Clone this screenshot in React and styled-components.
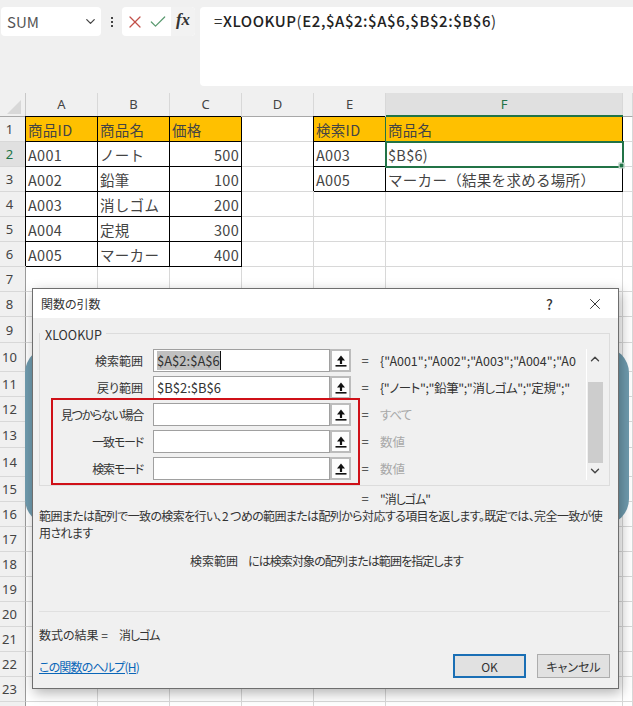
import React from "react";
import styled, { createGlobalStyle } from "styled-components";
import { ChevronDown, ChevronUp, X, Check } from "lucide-react";

const JP = `"Noto Sans CJK JP", "Noto Sans", sans-serif`;

const GlobalStyle = createGlobalStyle`
    html, body {
        margin: 0;
        padding: 0;
        background: #fff;
        overflow: hidden;
    }
    body {
        font-family: ${JP};
        color: #333;
    }
`;

const colWidths = [26, 72, 72, 72, 72, 72, 237, 10];
const rowHeights = [25, 25, 25, 25, 25, 25, 25, 25, 26, 29, 25, 25, 26, 29, 25, 25, 25, 25, 25, 25, 25, 25, 25, 25];

const cells = {
    "0:0": { text: "商品ID", fill: true },
    "0:1": { text: "商品名", fill: true },
    "0:2": { text: "価格", fill: true },
    "1:0": { text: "A001" },
    "1:1": { text: "ノート" },
    "1:2": { text: "500", right: true },
    "2:0": { text: "A002" },
    "2:1": { text: "鉛筆" },
    "2:2": { text: "100", right: true },
    "3:0": { text: "A003" },
    "3:1": { text: "消しゴム" },
    "3:2": { text: "200", right: true },
    "4:0": { text: "A004" },
    "4:1": { text: "定規" },
    "4:2": { text: "300", right: true },
    "5:0": { text: "A005" },
    "5:1": { text: "マーカー" },
    "5:2": { text: "400", right: true },
    "0:4": { text: "検索ID", fill: true },
    "0:5": { text: "商品名", fill: true },
    "1:4": { text: "A003" },
    "1:5": { text: "$B$6)" },
    "2:4": { text: "A005" },
    "2:5": { text: "マーカー（結果を求める場所）" },
};

const args = [
    { label: "検索範囲", value: "$A$2:$A$6", selected: true, result: `{"A001";"A002";"A003";"A004";"A005"}` },
    { label: "戻り範囲", value: "$B$2:$B$6", result: `{"ノート";"鉛筆";"消しゴム";"定規";"`, resultSpacing: -0.4 },
    { label: "見つからない場合", labelSpacing: -1.3, result: "すべて", resultSpacing: -1, muted: true },
    { label: "一致モード", labelSpacing: -1.2, result: "数値", muted: true },
    { label: "検索モード", labelSpacing: -1.2, result: "数値", muted: true },
];

const RefIcon = () => (
    <svg width="12" height="14" viewBox="0 0 12 14">
        <path d="M6 1.5 L10 6.5 H7.1 V10 H4.9 V6.5 H2 Z" fill="#111" />
        <rect x="0.5" y="11" width="11" height="1.6" fill="#111" />
    </svg>
);

const App = () => {
    return (
        <Page>
            <GlobalStyle />
            <Toolbar>
                <NameBox>
                    SUM
                    <ChevronDown size={15} color="#444" />
                </NameBox>
                <Dots>
                    <i /><i /><i />
                </Dots>
                <FormulaButtons>
                    <X size={20} strokeWidth={1.5} color="#c2504a" />
                    <Check size={20} strokeWidth={1.5} color="#5a9a70" />
                    <FxButton>fx</FxButton>
                </FormulaButtons>
                <FormulaBar>
                    =<b>XLOOKUP</b>(<b>E2,$A$2:$A$6,$B$2:$B$6</b>)
                </FormulaBar>
            </Toolbar>

            <Sheet>
                <Corner><svg width="16" height="16" viewBox="0 0 16 16"><path d="M15 1 V15 H1 Z" fill="#d8d8d8" /></svg></Corner>
                {["A", "B", "C", "D", "E", "F", ""].map((c, i) => (
                    <ColHead key={i} $active={c === "F"}>{c}</ColHead>
                ))}
                {rowHeights.map((_, r) => (
                    <React.Fragment key={r}>
                        <RowHead $active={r === 1}>{r < 23 ? r + 1 : ""}</RowHead>
                        {colWidths.slice(1).map((_, c) => {
                            const cell = cells[`${r}:${c}`];
                            return (
                                <Cell
                                    key={c}
                                    $boxed={!!cell}
                                    $fill={cell && cell.fill}
                                    $right={cell && cell.right}
                                    $range={c === 5 && r === 0}
                                    $active={c === 5 && r === 1}
                                >
                                    {cell && cell.text}
                                    {c === 5 && r === 1 && <FillHandle />}
                                </Cell>
                            );
                        })}
                    </React.Fragment>
                ))}
            </Sheet>

            <BlueShape />

            <Dialog>
                <TitleBar>
                    <span>関数の引数</span>
                    <TitleActions>
                        <HelpMark>?</HelpMark>
                        <X size={18} strokeWidth={1.2} color="#222" />
                    </TitleActions>
                </TitleBar>
                <DialogBody>
                    <ArgGroup>
                        <GroupTitle>XLOOKUP</GroupTitle>
                        <ArgList>
                            <div>
                                {args.map(a => (
                                    <ArgRow key={a.label}>
                                        <ArgLabel $spacing={a.labelSpacing}>{a.label}</ArgLabel>
                                        <ArgInput>
                                            {a.selected ? <Selected>{a.value}</Selected> : a.value}
                                        </ArgInput>
                                        <RefButton><RefIcon /></RefButton>
                                        <Equals>=</Equals>
                                        <ArgResult $muted={a.muted} $spacing={a.resultSpacing}>{a.result}</ArgResult>
                                    </ArgRow>
                                ))}
                            </div>
                            <ScrollBar>
                                <ChevronUp size={14} strokeWidth={2.4} color="#444" />
                                <Thumb />
                                <ChevronDown size={14} strokeWidth={2.4} color="#444" />
                            </ScrollBar>
                        </ArgList>
                        <RedFrame />
                    </ArgGroup>

                    <TotalRow>
                        <Equals>=</Equals>
                        <TightText>"消しゴム"</TightText>
                    </TotalRow>
                    <Description>
                        範囲または配列で一致の検索を行い、2 つめの範囲または配列から対応する項目を返します。既定では、完全一致が使用されます
                    </Description>
                    <ArgHelp>
                        <span>検索範囲</span>
                        <ArgHelpText>には検索対象の配列または範囲を指定します</ArgHelpText>
                    </ArgHelp>
                    <Divider />
                    <ResultLine>
                        <span>数式の結果 =</span>
                        <TightText>消しゴム</TightText>
                    </ResultLine>
                    <Footer>
                        <HelpLink>この関数のヘルプ(H)</HelpLink>
                        <Buttons>
                            <DialogButton $primary>OK</DialogButton>
                            <DialogButton>キャンセル</DialogButton>
                        </Buttons>
                    </Footer>
                </DialogBody>
            </Dialog>
        </Page>
    );
};

export default App;

const Page = styled.div`
    position: relative;
    width: 633px;
    height: 706px;
    overflow: hidden;
    background: #fff;
`;

const Toolbar = styled.div`
    display: flex;
    align-items: flex-start;
    height: 93px;
    padding: 7px 0 0 1px;
    box-sizing: border-box;
    background: #f0f0f0;
`;

const NameBox = styled.div`
    display: flex;
    align-items: center;
    justify-content: space-between;
    width: 100px;
    height: 29px;
    box-sizing: border-box;
    padding: 0 3px 0 6px;
    background: #fff;
    border-radius: 4px;
    font-size: 15px;
    color: #555;
`;

const Dots = styled.div`
    display: flex;
    flex-direction: column;
    gap: 2px;
    width: 21px;
    height: 29px;
    align-items: center;
    justify-content: center;

    i {
        width: 2px;
        height: 2px;
        background: #444;
    }
`;

const FormulaButtons = styled.div`
    display: flex;
    align-items: center;
    width: 73px;
    height: 29px;
    padding-left: 3px;
    gap: 3px;
    box-sizing: border-box;
    background: #fff;
    border-radius: 4px;
`;

const FxButton = styled.div`
    display: flex;
    align-items: center;
    justify-content: center;
    flex: 1;
    height: 100%;
    background: #f2f2f2;
    border-radius: 0 4px 4px 0;
    font-family: "Liberation Serif", serif;
    font-style: italic;
    font-weight: 700;
    font-size: 17px;
    color: #333;
    padding-bottom: 3px;
    box-sizing: border-box;
`;

const FormulaBar = styled.div`
    flex: 1;
    height: 79px;
    margin-left: 5px;
    padding: 5px 0 0 14px;
    box-sizing: border-box;
    background: #fff;
    border-radius: 4px 0 0 4px;
    font-size: 15px;
    letter-spacing: 0.55px;
    line-height: 18px;
    color: #333;
    white-space: nowrap;

    b {
        font-weight: 500;
        color: #222;
    }
`;

const Sheet = styled.div`
    display: grid;
    grid-template-columns: ${colWidths.map(w => `${w}px`).join(" ")};
    grid-template-rows: 24px ${rowHeights.map(h => `${h}px`).join(" ")};
    background: #fff;
`;

const Corner = styled.div`
    display: flex;
    align-items: flex-end;
    justify-content: flex-end;
    padding: 0 3px 1px 0;
    box-sizing: border-box;
    background: #f0f0f0;
    border-right: 1px solid #c8c8c8;
    border-bottom: 1px solid #a8a8a8;
`;

const ColHead = styled.div`
    display: flex;
    align-items: center;
    justify-content: center;
    padding-bottom: 2px;
    box-sizing: border-box;
    background: ${props => props.$active ? "#e0e0e0" : "#f0f0f0"};
    color: ${props => props.$active ? "#217346" : "#444"};
    border-right: 1px solid #d8d8d8;
    border-bottom: 1px solid #a8a8a8;
    font-size: 13px;
    font-family: "Noto Sans", sans-serif;
`;

const RowHead = styled.div`
    display: flex;
    align-items: center;
    justify-content: center;
    padding-right: 6px;
    box-sizing: border-box;
    background: ${props => props.$active ? "#e0e0e0" : "#f0f0f0"};
    color: ${props => props.$active ? "#217346" : "#444"};
    border-right: 1px solid ${props => props.$active ? "#217346" : "#9a9a9a"};
    border-bottom: 1px solid #d8d8d8;
    font-size: 13px;
    font-family: "Noto Sans", sans-serif;
`;

const Cell = styled.div`
    position: relative;
    display: flex;
    align-items: center;
    justify-content: ${props => props.$right ? "flex-end" : "flex-start"};
    padding: 0 2px 0 2px;
    box-sizing: border-box;
    font-size: 14.5px;
    letter-spacing: 0.3px;
    text-spacing-trim: space-all;
    color: #444;
    white-space: nowrap;
    background: ${props => props.$fill ? "#ffc000" : "#fff"};
    border-right: 1px solid ${props => props.$boxed ? "#000" : "#d8d8d8"};
    border-bottom: 1px solid ${props => props.$boxed ? "#000" : "#d8d8d8"};
    ${props => props.$boxed && "box-shadow: -1px -1px 0 #000; z-index: 1;"}
    ${props => props.$range && "box-shadow: -1px 0 0 #217346, 0 -2px 0 #217346; z-index: 2;"}
    ${props => props.$active && "outline: 2px solid #217346; outline-offset: -1px; z-index: 2;"}
`;

const FillHandle = styled.span`
    position: absolute;
    right: -3px;
    bottom: -3px;
    width: 5px;
    height: 5px;
    background: #217346;
    border: 1px solid #fff;
    box-sizing: content-box;
    transform: scale(0.8);
`;

const BlueShape = styled.div`
    position: absolute;
    left: 25px;
    top: 347px;
    width: 604px;
    height: 178px;
    border-radius: 26px;
    background: #6f9bae;
`;

const Dialog = styled.div`
    position: absolute;
    left: 32px;
    top: 288px;
    width: 587px;
    height: 401px;
    box-sizing: border-box;
    border: 1px solid #6e6e6e;
    background: #f0f0f0;
    box-shadow: 2px 4px 12px rgba(0, 0, 0, 0.3);
    font-size: 12px;
    color: #333;
    font-feature-settings: "palt";
`;

const TitleBar = styled.div`
    display: flex;
    align-items: center;
    justify-content: space-between;
    height: 29px;
    padding: 0 14px 0 8px;
    background: #fff;
    font-size: 12px;
`;

const TitleActions = styled.div`
    display: flex;
    align-items: center;
    gap: 33px;
`;

const HelpMark = styled.span`
    font-size: 14px;
    font-weight: 500;
`;

const DialogBody = styled.div`
    padding: 15px 8px 0 6px;
`;

const ArgGroup = styled.div`
    position: relative;
    height: 153px;
    box-sizing: border-box;
    border: 1px solid #dcdcdc;
`;

const GroupTitle = styled.div`
    height: 15px;
    line-height: 15px;
    margin-top: -7px;
    padding: 0 4px 0 5px;
    width: max-content;
    background: #f0f0f0;
    font-size: 12.5px;
`;

const ArgList = styled.div`
    display: grid;
    grid-template-columns: 546px 17px;
    padding-top: 7px;
`;

const ArgRow = styled.div`
    display: flex;
    align-items: center;
    height: 23px;
    margin-bottom: 4px;
`;

const ArgLabel = styled.div`
    width: 103px;
    margin-right: 10px;
    text-align: right;
    white-space: nowrap;
    letter-spacing: ${props => props.$spacing || 0}px;
`;

const ArgInput = styled.div`
    width: 177px;
    height: 23px;
    line-height: 21px;
    padding-left: 3px;
    box-sizing: border-box;
    background: #fff;
    border: 1px solid #a0a0a0;
    white-space: nowrap;
    font-size: 13px;
`;

const Selected = styled.span`
    background: #c0c0c0;
    border-right: 1px solid #111;
`;

const RefButton = styled.div`
    display: flex;
    align-items: center;
    justify-content: center;
    width: 21px;
    height: 23px;
    box-sizing: border-box;
    background: #fdfdfd;
    border: 2px solid #bcbcbc;
`;

const Equals = styled.span`
    display: inline-block;
    width: 14px;
    margin-left: 7px;
    margin-right: 8px;
    text-align: center;
    font-size: 13px;
`;

const ArgResult = styled.div`
    width: 196px;
    overflow: hidden;
    white-space: nowrap;
    font-size: 12.5px;
    letter-spacing: ${props => props.$spacing || 0}px;
    color: ${props => props.$muted ? "#a8a8a8" : "#333"};
`;

const ScrollBar = styled.div`
    display: flex;
    flex-direction: column;
    align-items: center;
    height: 131px;
    padding-top: 3px;
    box-sizing: border-box;
    background: #f0f0f0;
    border-left: 1px solid #fff;
`;

const Thumb = styled.div`
    flex: none;
    width: 15px;
    height: 81px;
    margin: 16px 0 1px;
    background: #cdcdcd;
`;

const RedFrame = styled.div`
    position: absolute;
    left: 11px;
    top: 64px;
    width: 309px;
    height: 87px;
    box-sizing: border-box;
    border: 2px solid #cf1018;
    pointer-events: none;
`;

const TotalRow = styled.div`
    display: flex;
    align-items: center;
    height: 18px;
    margin-top: 3px;
    padding-left: 312px;
`;

const TightText = styled.span`
    letter-spacing: -1px;
`;

const Description = styled.div`
    width: 565px;
    line-height: 17px;
    font-size: 12px;
    letter-spacing: -0.62px;
`;

const ArgHelp = styled.div`
    display: flex;
    gap: 10px;
    padding-left: 151px;
    margin-top: 11px;
    line-height: 17px;
`;

const ArgHelpText = styled.span`
    letter-spacing: -0.9px;
`;

const Divider = styled.div`
    height: 1px;
    margin-top: 42px;
    background: #e0e0e0;
`;

const ResultLine = styled.div`
    display: flex;
    gap: 11px;
    margin-top: 14px;
    line-height: 17px;
`;

const Footer = styled.div`
    display: flex;
    align-items: center;
    justify-content: space-between;
    margin-top: 11px;
    height: 24px;
`;

const HelpLink = styled.a`
    color: #0a66b8;
    text-decoration: underline;
    letter-spacing: -0.8px;
    cursor: pointer;
`;

const Buttons = styled.div`
    display: flex;
    gap: 11px;
`;

const DialogButton = styled.div`
    display: flex;
    align-items: center;
    justify-content: center;
    width: 73px;
    height: 24px;
    box-sizing: border-box;
    background: #e1e1e1;
    border: ${props => props.$primary ? "2px solid #1a6fb5" : "1px solid #adadad"};
`;
